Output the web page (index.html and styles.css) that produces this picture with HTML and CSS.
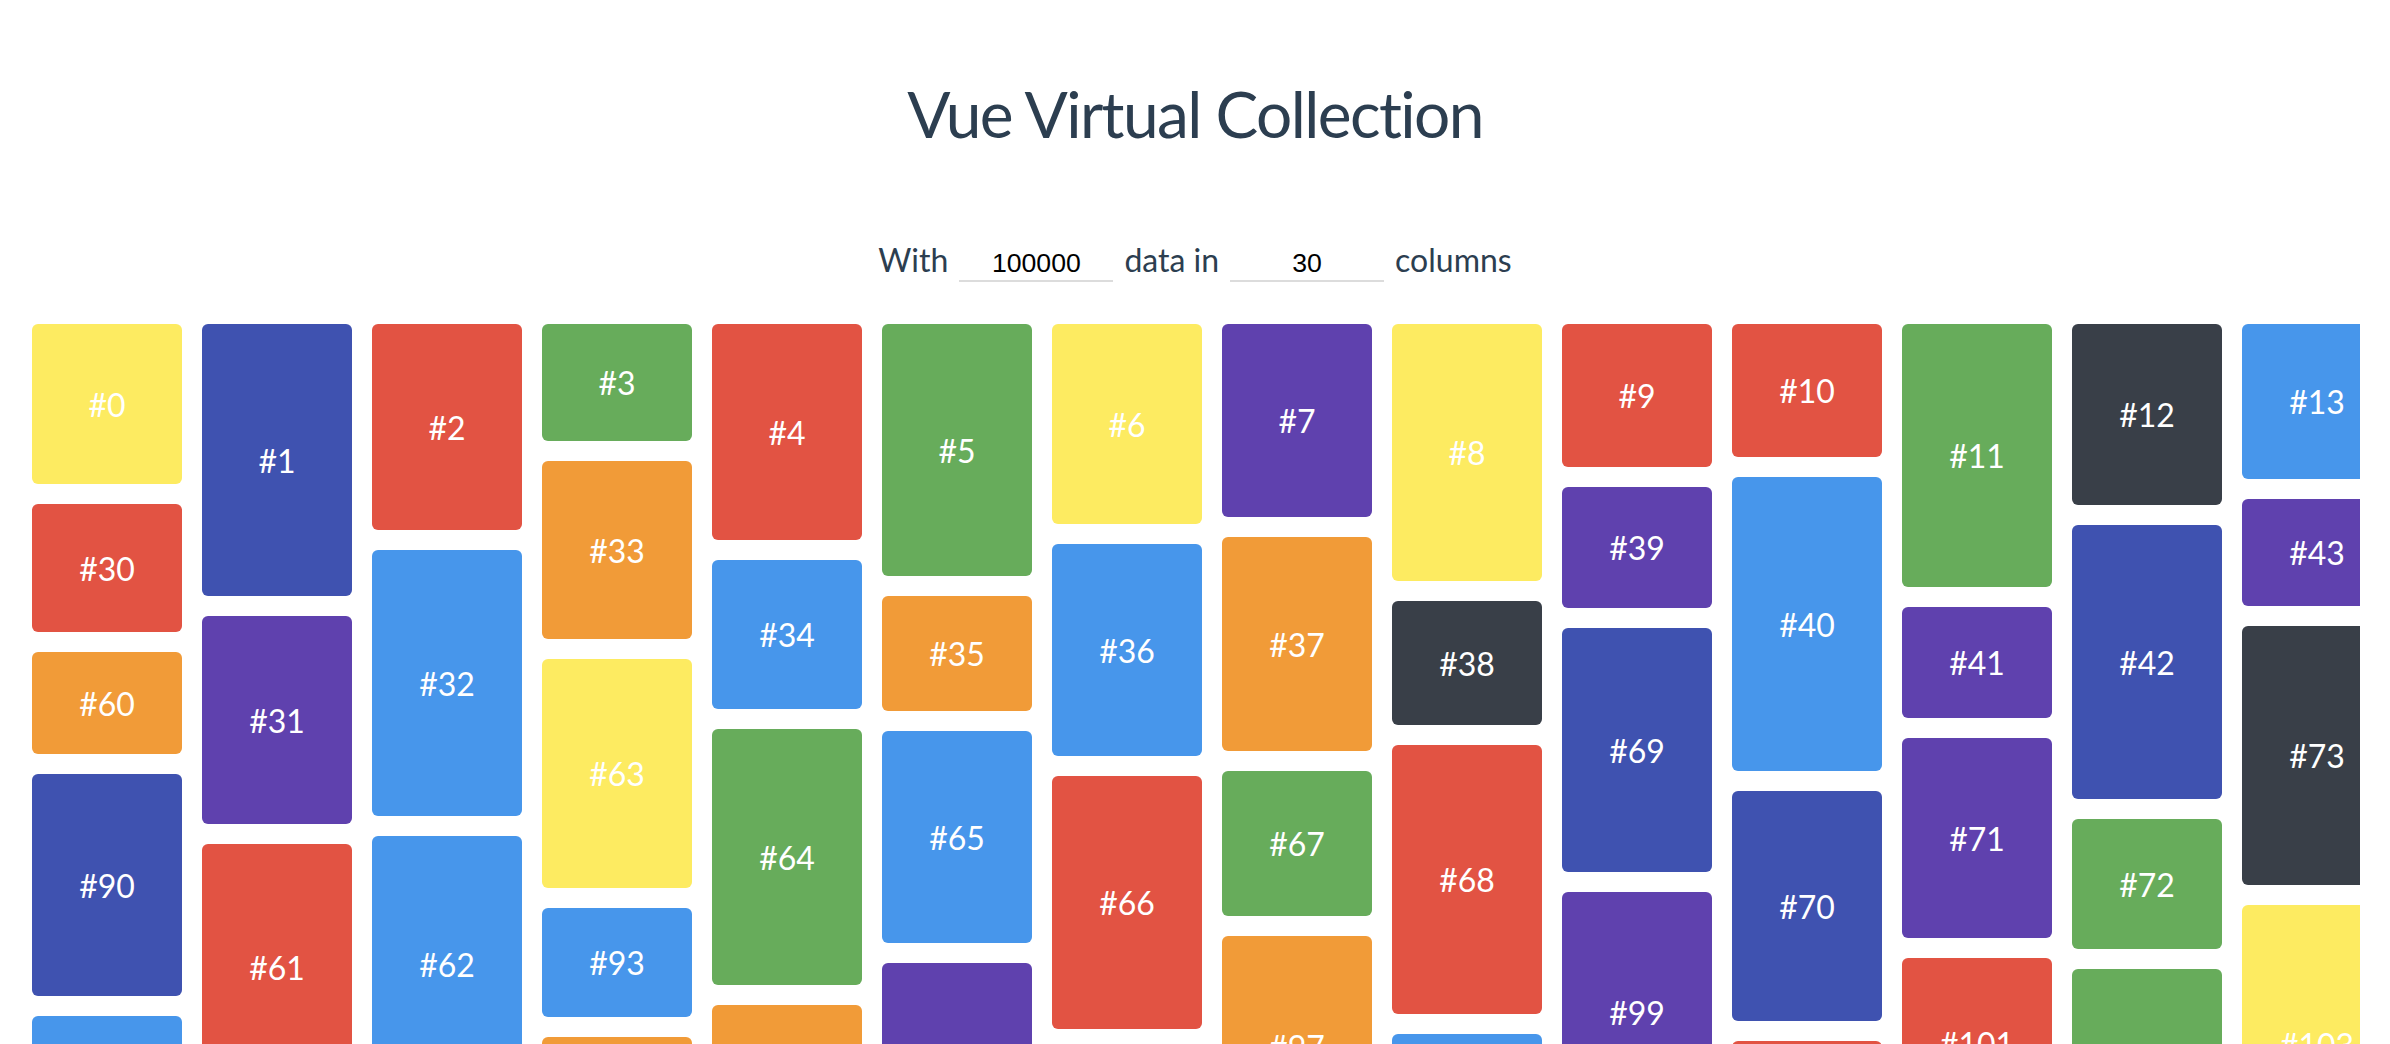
FILE: index.html
```html
<!DOCTYPE html>
<html lang="en">
<head>
<meta charset="utf-8">
<title>Vue Virtual Collection</title>
<link rel="stylesheet" href="styles.css">
</head>
<body>
<div class="app">
  <h1 class="title">Vue Virtual Collection</h1>
  <div class="controls">
    <span class="label">With</span>
    <input class="field" type="text" value="100000">
    <span class="label">data in</span>
    <input class="field" type="text" value="30">
    <span class="label">columns</span>
  </div>
  <div class="collection">
    <div class="column">
      <div class="item yellow" style="height:160px">#0</div>
      <div class="item red" style="height:128px">#30</div>
      <div class="item orange" style="height:102px">#60</div>
      <div class="item indigo" style="height:222px">#90</div>
      <div class="item blue" style="height:200px"></div>
    </div>
    <div class="column">
      <div class="item indigo" style="height:272px">#1</div>
      <div class="item purple" style="height:208px">#31</div>
      <div class="item red" style="height:246px">#61</div>
    </div>
    <div class="column">
      <div class="item red" style="height:206px">#2</div>
      <div class="item blue" style="height:266px">#32</div>
      <div class="item blue" style="height:256px">#62</div>
    </div>
    <div class="column">
      <div class="item green" style="height:117px">#3</div>
      <div class="item orange" style="height:178px">#33</div>
      <div class="item yellow" style="height:229px">#63</div>
      <div class="item blue" style="height:109px">#93</div>
      <div class="item orange" style="height:200px"></div>
    </div>
    <div class="column">
      <div class="item red" style="height:216px">#4</div>
      <div class="item blue" style="height:149px">#34</div>
      <div class="item green" style="height:256px">#64</div>
      <div class="item orange" style="height:200px"></div>
    </div>
    <div class="column">
      <div class="item green" style="height:252px">#5</div>
      <div class="item orange" style="height:115px">#35</div>
      <div class="item blue" style="height:212px">#65</div>
      <div class="item purple" style="height:200px"></div>
    </div>
    <div class="column">
      <div class="item yellow" style="height:200px">#6</div>
      <div class="item blue" style="height:212px">#36</div>
      <div class="item red" style="height:253px">#66</div>
    </div>
    <div class="column">
      <div class="item purple" style="height:193px">#7</div>
      <div class="item orange" style="height:214px">#37</div>
      <div class="item green" style="height:145px">#67</div>
      <div class="item orange" style="height:220px">#97</div>
    </div>
    <div class="column">
      <div class="item yellow" style="height:257px">#8</div>
      <div class="item dark" style="height:124px">#38</div>
      <div class="item red" style="height:269px">#68</div>
      <div class="item blue" style="height:200px"></div>
    </div>
    <div class="column">
      <div class="item red" style="height:143px">#9</div>
      <div class="item purple" style="height:121px">#39</div>
      <div class="item indigo" style="height:244px">#69</div>
      <div class="item purple" style="height:240px">#99</div>
    </div>
    <div class="column">
      <div class="item red" style="height:133px">#10</div>
      <div class="item blue" style="height:294px">#40</div>
      <div class="item indigo" style="height:230px">#70</div>
      <div class="item red" style="height:200px"></div>
    </div>
    <div class="column">
      <div class="item green" style="height:263px">#11</div>
      <div class="item purple" style="height:111px">#41</div>
      <div class="item purple" style="height:200px">#71</div>
      <div class="item red" style="height:170px">#101</div>
    </div>
    <div class="column">
      <div class="item dark" style="height:181px">#12</div>
      <div class="item indigo" style="height:274px">#42</div>
      <div class="item green" style="height:130px">#72</div>
      <div class="item green" style="height:200px"></div>
    </div>
    <div class="column">
      <div class="item blue" style="height:155px">#13</div>
      <div class="item purple" style="height:107px">#43</div>
      <div class="item dark" style="height:259px">#73</div>
      <div class="item yellow" style="height:279px">#103</div>
    </div>
  </div>
</div>
</body>
</html>
```

FILE: styles.css
```css
html, body {
  margin: 0;
  padding: 0;
  background: #ffffff;
  overflow: hidden;
}

.app {
  font-family: "Lato", "Liberation Sans", sans-serif;
  color: #2c3e50;
  text-align: center;
  padding-top: 82px;
}

.title {
  margin: 0;
  font-size: 64px;
  line-height: 64px;
  font-weight: 400;
  letter-spacing: -1.6px;
}

.controls {
  display: flex;
  justify-content: center;
  align-items: baseline;
  gap: 11px;
  margin-top: 98px;
  height: 38px;
}

.label {
  font-size: 32px;
  line-height: 32px;
}

.field {
  width: 154px;
  box-sizing: border-box;
  font-family: "Liberation Sans", Arial, sans-serif;
  font-size: 26.67px;
  color: #000000;
  text-align: center;
  padding: 1px 2px;
  margin: 0;
  border: none;
  border-bottom: 2px solid #dcdcdc;
  background: transparent;
  outline: none;
}

.collection {
  display: flex;
  align-items: flex-start;
  gap: 20px;
  margin-top: 42px;
  margin-left: 32px;
  width: 2328px;
  height: 720px;
  overflow: hidden;
}

.column {
  flex: 0 0 150px;
  display: flex;
  flex-direction: column;
  gap: 20px;
}

.item {
  display: flex;
  align-items: center;
  justify-content: center;
  flex: 0 0 auto;
  border-radius: 6px;
  color: #ffffff;
  font-size: 32px;
}

.yellow { background: #fdeb61; }
.red { background: #e25343; }
.orange { background: #f19b38; }
.indigo { background: #3f52b0; }
.blue { background: #4796eb; }
.purple { background: #5f41ae; }
.green { background: #67ac5b; }
.dark { background: #393f48; }
```
